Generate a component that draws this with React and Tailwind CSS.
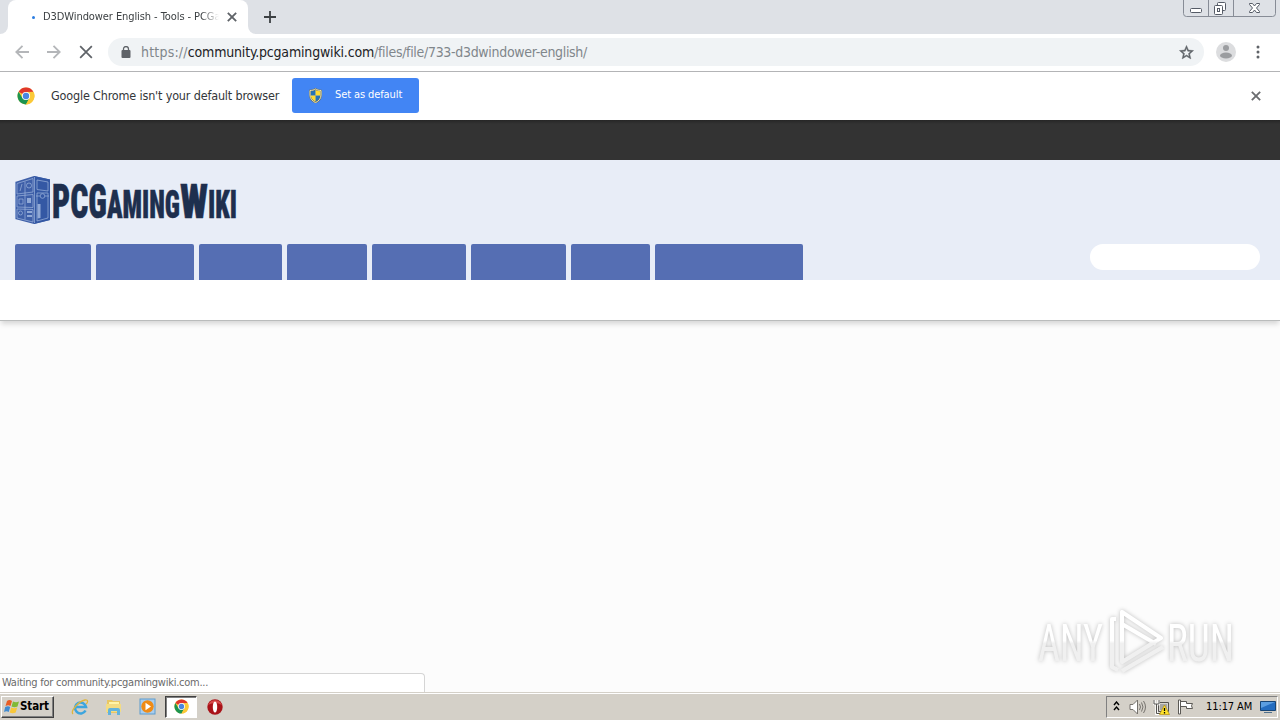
import { useId } from 'react';

const navTabs = [
  'w-[76px]',
  'w-[98px]',
  'w-[83px]',
  'w-[80px]',
  'w-[94px]',
  'w-[95px]',
  'w-[79px]',
  'w-[148px]',
];

function CloseIcon({ className, width = 1.8 }) {
  return (
    <svg viewBox="0 0 12 12" className={className} fill="none" stroke="currentColor" strokeWidth={width}>
      <path d="M1 1 11 11M11 1 1 11" />
    </svg>
  );
}

function ArrowIcon({ className }) {
  return (
    <svg viewBox="0 0 14 14" className={className} fill="none" stroke="currentColor" strokeWidth="1.8">
      <path d="M14 7H1.5M7.5 .8 1.3 7l6.2 6.2" />
    </svg>
  );
}

function ChromeIcon({ className }) {
  return (
    <svg viewBox="0 0 18 18" className={className}>
      <circle cx="9" cy="9" r="8.5" fill="#fbc938" />
      <path d="M9 9 1.6 4.8A8.5 8.5 0 0 1 16.4 4.8L9 5z" fill="#e0372c" />
      <path d="M1.6 4.8A8.5 8.5 0 0 0 9 17.5L12.5 11 9 9 5.4 11z" fill="#1c9450" />
      <path d="M9 5h7.5A8.5 8.5 0 0 1 9 17.5L12.5 11z" fill="#fbc938" />
      <circle cx="9" cy="9" r="4.1" fill="#fff" />
      <circle cx="9" cy="9" r="3.2" fill="#4a86e0" />
    </svg>
  );
}

function ShieldIcon({ className }) {
  const clip = useId();
  const outline = 'M7.5 1C9 2 11 2.5 13 2.5V7c0 3.8-2.500 6.3-5.5 7.6C4.500 13.300 2 10.800 2 7V2.500C4 2.500 6 2 7.500 1z';
  return (
    <svg viewBox="0 0 15 15" className={className}>
      <clipPath id={clip}><path d={outline} /></clipPath>
      <g clipPath={`url(#${clip})`}>
        <path d="M0 0h7.500v7.500H0zM7.500 7.500H15V15H7.500z" fill="#2673b8" />
        <path d="M7.500 0H15v7.500H7.500zM0 7.500h7.500V15H0z" fill="#ffdb32" />
      </g>
      <path d={outline} fill="none" stroke="#6d7060" strokeWidth="1.600" />
      <path d={outline} fill="none" stroke="#e9e3b0" strokeWidth="1" />
    </svg>
  );
}

function TabStrip() {
  return (
    <div className="flex h-[34px] justify-between bg-[#dee1e6]">
      <div className="flex">
        <div className="w-2 bg-white"><div className="h-full rounded-br-lg bg-[#dee1e6]" /></div>
        <div className="flex w-[240px] items-center rounded-t-lg bg-white pl-[24px]">
          <span className="h-[3px] w-[3px] rounded-full bg-[#2b7de1]" />
          <span className="ml-2 w-[176px] overflow-hidden whitespace-nowrap text-[11px] leading-4 tracking-[-0.08px] text-[#3c4043] [mask-image:linear-gradient(to_right,#000_90%,transparent)]">
            D3DWindower English - Tools - PCGa
          </span>
          <CloseIcon className="ml-[8px] h-[10px] w-[10px] text-[#5f6368]" width={2.2} />
        </div>
        <div className="w-2 bg-white"><div className="h-full rounded-bl-lg bg-[#dee1e6]" /></div>
        <svg viewBox="0 0 12 12" className="mt-[11px] ml-2 h-3 w-3" stroke="#3c4043" strokeWidth="1.800">
          <path d="M6 0v12M0 6h12" />
        </svg>
      </div>
      <WindowControls />
    </div>
  );
}

function WindowControls() {
  return (
    <svg viewBox="0 0 93 17" className="mr-1 h-[17px] w-[93px]" fill="none" stroke="#70757e">
      <path d="M.5 0v13.500a3 3 0 0 0 3 3h86a3 3 0 0 0 3-3V0M25.500 0v16.500M50.500 0v16.500" stroke="#878c96" />
      <rect x="7.500" y="8.500" width="11" height="4" rx="1" fill="#fff" stroke="#555b66" />
      <rect x="34.500" y="2.500" width="8" height="8" rx="1" fill="#fff" stroke="#555b66" />
      <rect x="31.500" y="5.500" width="8" height="9" rx="1" fill="#fff" stroke="#555b66" />
      <rect x="34.500" y="8.500" width="2" height="3" stroke="#555b66" />
      <path d="M66.500 3.500h3l2 2.500 2-2.500h3v1l-3 3.500 3 3.500v1h-3l-2-2.500-2 2.500h-3v-1l3-3.500-3-3.500z" fill="#fff" stroke="#555b66" />
    </svg>
  );
}

function Toolbar() {
  return (
    <div className="flex h-[38px] items-center border-b border-[#b3b4b6] bg-white pb-px">
      <ArrowIcon className="ml-[15px] h-[14px] w-[14px] text-[#b4b6b9]" />
      <ArrowIcon className="ml-[18px] h-[14px] w-[14px] rotate-180 text-[#b4b6b9]" />
      <CloseIcon className="ml-[18px] h-[14px] w-[14px] text-[#5f6368]" width={1.5} />
      <div className="ml-[15px] flex h-[28px] w-[1096px] items-center rounded-full bg-[#f0f3f5]">
        <svg viewBox="0 0 10 13" className="ml-[13px] h-[13px] w-[10px]">
          <rect x=".5" y="4" width="9" height="8" rx="1" fill="#5f6368" />
          <path d="M2.500 4.500V3a2.500 2.500 0 0 1 5 0v1.500" fill="none" stroke="#5f6368" strokeWidth="1.300" />
        </svg>
        <span className="ml-[10px] whitespace-nowrap text-[14px] leading-5 text-[#80868b]">
          <span className="tracking-[0.2px]">https://</span>
          <span className="tracking-[-0.18px] text-[#202124]">community.pcgamingwiki.com</span>
          <span className="tracking-[-0.31px]">/files/file/733-d3dwindower-english/</span>
        </span>
        <svg viewBox="0 0 24 24" className="mr-[9px] ml-auto h-[17px] w-[17px]" fill="#5f6368" stroke="#5f6368" strokeWidth=".6">
          <path d="m22 9.240-7.190-.62L12 2 9.190 8.630 2 9.240l5.460 4.730L5.820 21 12 17.270 18.180 21l-1.630-7.030zM12 15.400l-3.760 2.270 1-4.280-3.320-2.880 4.380-.38L12 6.100l1.710 4.040 4.380.38-3.320 2.880 1 4.280z" />
        </svg>
      </div>
      <svg viewBox="0 0 20 20" className="ml-3 h-5 w-5">
        <circle cx="10" cy="10" r="10" fill="#dcdddf" />
        <circle cx="10" cy="6" r="3" fill="#9b9da0" />
        <ellipse cx="10" cy="13.500" rx="6" ry="3" fill="#9b9da0" />
      </svg>
      <svg viewBox="0 0 4 14" className="ml-5 h-[14px] w-1" fill="#5f6368">
        <circle cx="2" cy="2" r="1.500" /><circle cx="2" cy="7" r="1.500" /><circle cx="2" cy="12" r="1.500" />
      </svg>
    </div>
  );
}

function DefaultBrowserBar() {
  return (
    <div className="flex h-[48px] items-center bg-white">
      <ChromeIcon className="ml-[17px] h-[18px] w-[18px]" />
      <span className="ml-4 w-[229px] whitespace-nowrap text-[12.5px] leading-4 tracking-[-0.17px] text-[#333639]">Google Chrome isn't your default browser</span>
      <button className="mb-[2px] ml-3 flex h-[35px] w-[127px] items-center rounded-[3px] bg-[#4285f4] pl-4 text-white">
        <ShieldIcon className="h-[15px] w-[15px]" />
        <span className="ml-3 whitespace-nowrap text-[11px] tracking-[-0.1px]">Set as default</span>
      </button>
      <CloseIcon className="mr-[19px] ml-auto h-[10px] w-[10px] text-[#6b6d70]" width={2.200} />
    </div>
  );
}

function SiteLogo() {
  return (
    <svg viewBox="0 0 222 50" className="h-[50px] w-[222px] overflow-visible">
      <path d="M0 7 19 1l16 3.500V45L19 49 0 44z" fill="#3e5fa8" />
      <path d="M19 1v48L35 45V4.500z" fill="#3458a4" />
      <g fill="none" stroke="#9eb4dc" strokeWidth=".7">
        <path d="M19.500 2v46M2 8.500l16-5V17L2 19zM10 6.500v38M2 21l16-1.500v13L2 32zM2 34l16 .5V47L2 43zM.5 7v37M22 5l11 2v9l-11-1.500zM22 18h11v25l-11 3z" />
        <circle cx="14" cy="10.500" r="2.500" />
        <circle cx="5.500" cy="38" r="2" />
        <path d="m5 16 2-7M21 21h4M30 21h4M4 24h4v5H4z" />
        <circle cx="27.500" cy="21" r="2.300" />
      </g>
      <path d="M12 23h4v5h-4zM22.500 29h3v14l-3 .5zM12 36h5v2h-5zM12 40h5v2h-5z" fill="#91a9d6" />
      <g fill="#1e2f4e" stroke="#1e2f4e" strokeWidth=".5" fontFamily="'Roboto', sans-serif" fontWeight="900">
        <text x="37" y="43" fontSize="49" textLength="55" lengthAdjust="spacingAndGlyphs">PCG</text>
        <text x="92" y="43" fontSize="38" textLength="73" lengthAdjust="spacingAndGlyphs">AMING</text>
        <text x="165" y="43" fontSize="49" textLength="28" lengthAdjust="spacingAndGlyphs">W</text>
        <text x="193" y="43" fontSize="38" textLength="29" lengthAdjust="spacingAndGlyphs">IKI</text>
      </g>
    </svg>
  );
}

function AnyRunMark() {
  return (
    <svg viewBox="0 0 204 70" className="absolute top-[286px] left-[1035px] h-[70px] w-[204px] drop-shadow-[0_0_2px_rgba(0,0,0,0.25)]">
      <defs>
        <linearGradient id="mark" x1="0" y1="0" x2="0" y2="70" gradientUnits="userSpaceOnUse">
          <stop offset=".48" stopColor="#fff" />
          <stop offset=".52" stopColor="#f0f0f0" />
        </linearGradient>
      </defs>
      <g fill="url(#mark)" fontFamily="'Roboto', sans-serif" fontSize="51">
        <text x="3" y="54" textLength="65" lengthAdjust="spacingAndGlyphs">ANY</text>
        <text x="132" y="54" textLength="67" lengthAdjust="spacingAndGlyphs">RUN</text>
      </g>
      <g fill="none" stroke="url(#mark)" strokeWidth="4" strokeLinejoin="round">
        <path d="M87 5v50l39-24zM81 12h-4v48l6 3M87 64l41-24M87 17l34 20" />
      </g>
    </svg>
  );
}

function StartButton() {
  return (
    <button className="flex h-[22px] w-[53px] items-center border border-t-white border-r-[#404040] border-b-[#404040] border-l-white bg-[#d4d0c8] pl-[2px] shadow-[inset_-1px_-1px_0_#808080]">
      <svg viewBox="0 0 16 16" className="h-4 w-4">
        <path d="M3 2c2-1.500 3.500-1 5 0L6.500 7C5 6 3.500 6 1.500 7z" fill="#e95d24" />
        <path d="M9 2.500c2 1 4 1 6 0L13.500 7.500c-2 1-4 1-6 0z" fill="#80b938" />
        <path d="M1.200 8c2-1 3.500-1 5 0L4.700 13c-1.500-1-3-1-4.700 0z" fill="#418bd0" />
        <path d="M7.200 8.500c2 1 4 1 6 0L11.700 13.500c-2 1-4 1-6 0z" fill="#f8c73a" />
      </svg>
      <span className="pt-px text-[11.5px] font-bold tracking-[-0.1px] text-black">Start</span>
    </button>
  );
}

function TaskIcons() {
  return (
    <div className="flex items-center">
      <svg viewBox="0 0 18 18" className="ml-[17px] h-[18px] w-[18px]" fill="none">
        <path d="M14.500 12.500a5.500 5.500 0 1 1 .5-3.500H5" stroke="#3ca5de" strokeWidth="2.600" />
        <path d="M2 16C-1 13 8 3 14 2c4-.5 2.500 3 1 4" stroke="#dfb53c" strokeWidth="1.300" />
      </svg>
      <svg viewBox="0 0 18 18" className="ml-4 h-[18px] w-[18px]">
        <path d="M2 2h5l1 1h7v12H2z" fill="#e9c763" />
        <path d="M4 4h10v8H4z" fill="#fff4a8" />
        <path d="M1 6h15v8H1z" fill="#f3dc83" />
        <path d="M3 17v-5q0-2 2-2h8q2 0 2 2v5h-3v-4H6v4z" fill="#62b3dc" />
      </svg>
      <svg viewBox="0 0 17 17" className="ml-4 h-[17px] w-[17px]">
        <rect x="1" y="1" width="15" height="15" fill="#a9cdee" stroke="#5d9ccd" />
        <circle cx="8.500" cy="8.500" r="6.200" fill="#ef8b16" />
        <path d="m6.500 4.800 5.500 3.700-5.500 3.700z" fill="#fff" />
      </svg>
      <div className="ml-[9px] flex h-[22px] w-[32px] items-center justify-center border border-t-[#404040] border-r-white border-b-white border-l-[#404040] bg-white shadow-[inset_1px_1px_0_#808080]">
        <ChromeIcon className="h-[15px] w-[15px]" />
      </div>
      <svg viewBox="0 0 16 16" className="ml-[10px] h-4 w-4">
        <circle cx="8" cy="8" r="7.700" fill="#a91218" />
        <path d="M1 6a7.500 7.500 0 0 1 14 0q-7-4-14 0" fill="#d6494a" />
        <ellipse cx="8" cy="8" rx="2.200" ry="5.500" fill="#fff" />
      </svg>
    </div>
  );
}

function SystemTray() {
  return (
    <div className="mr-[2px] ml-auto flex h-[22px] w-[172px] items-center border border-t-[#808080] border-r-white border-b-white border-l-[#808080]">
      <svg viewBox="0 0 7 10" className="mb-[2px] ml-[6px] h-[10px] w-[7px]" fill="none" stroke="#000" strokeWidth="1.400">
        <path d="m1 4 2.500-3L6 4M1 9l2.500-3L6 9" />
      </svg>
      <svg viewBox="0 0 17 16" className="ml-[9px] h-4 w-[17px]" fill="none" stroke="#76736e">
        <path d="M1 5.500h3L8.500 1v14L4 10.500H1z" fill="#fff" />
        <path d="M10.500 5q2 3 0 6M12.500 3.500q3 4.500 0 9M14.500 2q4 6 0 12" />
      </svg>
      <svg viewBox="0 0 17 16" className="ml-[7px] h-4 w-[17px]">
        <path d="M5.500 3.500h10v9h-10z" fill="#d5d3ce" stroke="#55534f" />
        <path d="M7 5h7v6H7z" fill="#a6a6a3" />
        <path d="M1.500 1v4h4V1M3.500 5v10h6" fill="none" stroke="#fff" strokeWidth="2.500" />
        <path d="M1 1v4h5V1M3.500 5v9.500h5" fill="none" stroke="#55534f" />
        <path d="m11.500 6 5 9.500h-10z" fill="#ffe32a" stroke="#b48d10" strokeWidth=".7" />
        <path d="M11.500 9v3m0 1v1.500" stroke="#000" strokeWidth="1.300" />
      </svg>
      <svg viewBox="0 0 16 16" className="ml-[7px] h-4 w-4" fill="#fff" stroke="#5b5955">
        <path d="M1.500 1h2v14h-2zM3.500 2.500h6v2h6q-2 2 0 5H9.500v-2h-6z" />
      </svg>
      <span className="ml-[13px] w-[48px] whitespace-nowrap pt-[2px] text-[11px] tracking-[-0.1px] text-black">11:17 AM</span>
      <svg viewBox="0 0 16 14" className="ml-[6px] h-[14px] w-4">
        <path d="M.5 1.500h15v9H.5z" fill="#246dc0" stroke="#174576" />
        <path d="M1 2h14L1 8z" fill="#5b9ee1" />
        <path d="M4 12.500h8" stroke="#50708c" />
      </svg>
    </div>
  );
}

export default function App() {
  return (
    <div className="flex h-[720px] w-[1280px] flex-col overflow-hidden bg-[#fcfcfc] [font-family:'DejaVu_Sans_Condensed','DejaVu_Sans',sans-serif] [font-stretch:condensed]">
      <TabStrip />
      <Toolbar />
      <DefaultBrowserBar />
      <div className="h-10 bg-[#333] bg-linear-to-b from-[#262626] to-[#333] to-10%" />
      <header className="h-[120px] bg-[#e8edf7] pt-[15px] pr-5 pl-[15px]">
        <SiteLogo />
        <div className="mt-[19px] flex items-start justify-between">
          <nav className="flex gap-[5px]">
            {navTabs.map((width, i) => (
              <div key={i} className={`h-9 rounded-t-[2px] bg-[#556eb3] ${width}`} />
            ))}
          </nav>
          <div className="h-[26px] w-[170px] rounded-full bg-white" />
        </div>
      </header>
      <div className="h-[41px] border-b border-[#babcbc] bg-white shadow-[0_4px_5px_-1px_rgba(0,0,0,0.15)]" />
      <main className="relative flex h-[371px] flex-col justify-end">
        <AnyRunMark />
        <div className="flex h-[19px] w-[425px] items-center rounded-tr border border-b-0 border-l-0 border-[#d5d5d5] bg-white pt-px pl-[2px] text-[11px] tracking-[-0.25px] whitespace-nowrap text-[#6a6a6a]">
          Waiting for community.pcgamingwiki.com...
        </div>
      </main>
      <footer className="flex h-7 items-center border-t border-[#d4d0c8] bg-[#d4d0c8] pl-[1px] shadow-[inset_0_1px_0_#fff]">
        <StartButton />
        <TaskIcons />
        <SystemTray />
      </footer>
    </div>
  );
}
